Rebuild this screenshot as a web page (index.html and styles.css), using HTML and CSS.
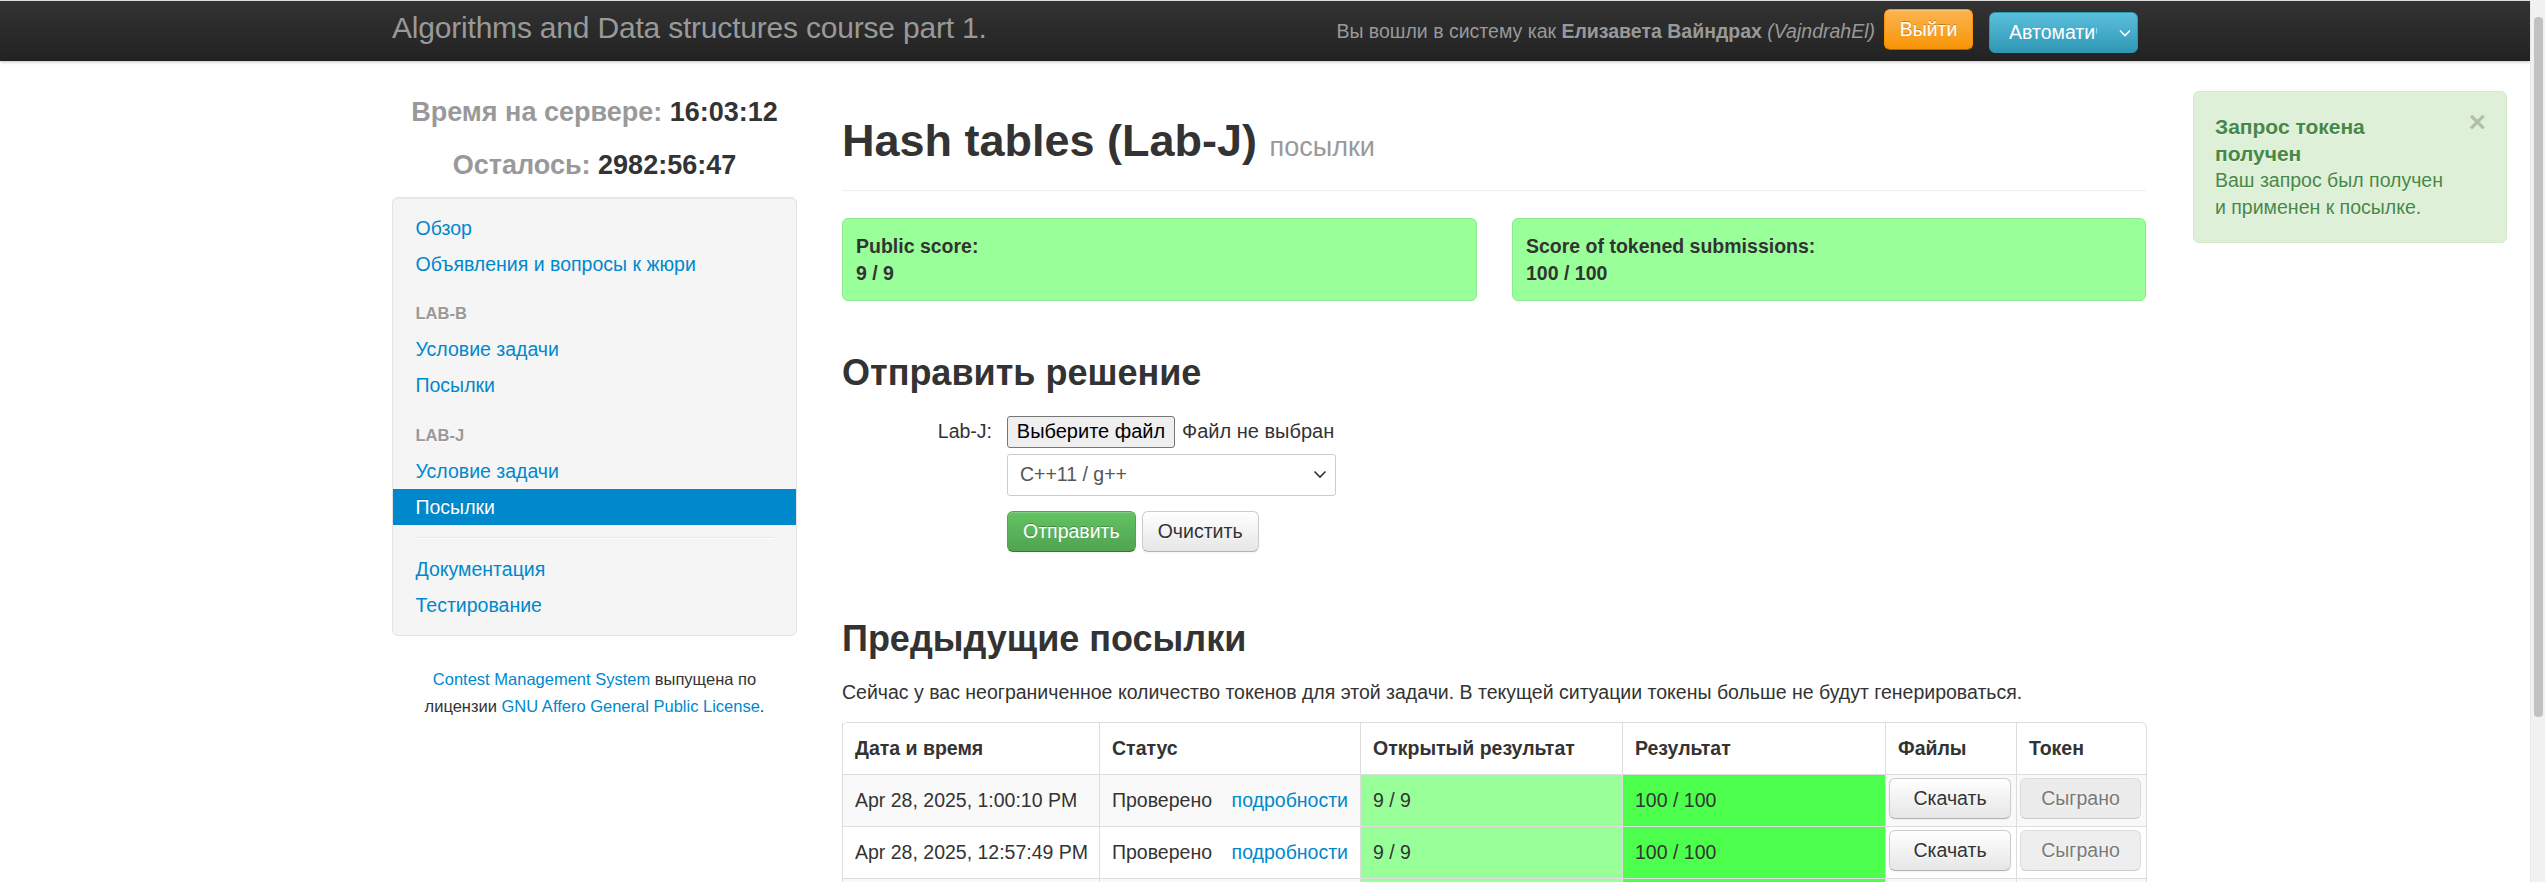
FILE: index.html
```html
<!DOCTYPE html>
<html lang="ru">
<head>
<meta charset="utf-8">
<title>Hash tables (Lab-J) посылки</title>
<link rel="stylesheet" href="styles.css">
</head>
<body>
<header class="navbar">
  <div class="navbar-inner">
    <a class="brand" href="#">Algorithms and Data structures course part 1.</a>
    <div class="nav-right">
      <p class="navbar-text">Вы вошли в систему как <strong>Елизавета Вайндрах</strong> <em>(VajndrahEl)</em></p>
      <a class="btn btn-warning btn-logout" href="#">Выйти</a>
      <div class="lang-select">
        <span class="lang-text">Автоматически</span>
        <svg class="lang-chevron" width="12" height="8" viewBox="0 0 12 8"><path d="M1 1.5 L6 6.5 L11 1.5" fill="none" stroke="#fff" stroke-width="1.6"/></svg>
      </div>
    </div>
  </div>
</header>

<div class="page">
  <aside class="sidebar">
    <h3 class="clock first"><span class="clock-label">Время на сервере:</span> 16:03:12</h3>
    <h3 class="clock"><span class="clock-label">Осталось:</span> 2982:56:47</h3>
    <div class="well">
      <ul class="nav-list">
        <li><a href="#">Обзор</a></li>
        <li><a href="#">Объявления и вопросы к жюри</a></li>
        <li class="nav-header">LAB-B</li>
        <li><a href="#">Условие задачи</a></li>
        <li><a href="#">Посылки</a></li>
        <li class="nav-header">LAB-J</li>
        <li><a href="#">Условие задачи</a></li>
        <li class="active"><a href="#">Посылки</a></li>
        <li class="divider"></li>
        <li><a href="#">Документация</a></li>
        <li><a href="#">Тестирование</a></li>
      </ul>
    </div>
    <p class="footer"><a href="#">Contest Management System</a> выпущена по лицензии <a href="#">GNU Affero General Public License</a>.</p>
  </aside>

  <main class="main">
    <div class="page-header">
      <h1>Hash tables (Lab-J) <small>посылки</small></h1>
    </div>

    <div class="score-row">
      <div class="score-box">
        <strong>Public score:</strong><br>
        <strong>9 / 9</strong>
      </div>
      <div class="score-box">
        <strong>Score of tokened submissions:</strong><br>
        <strong>100 / 100</strong>
      </div>
    </div>

    <h2 class="section-title submit-title">Отправить решение</h2>
    <form class="submit-form">
      <div class="form-row">
        <label class="control-label">Lab-J:</label>
        <div class="controls file-controls">
          <span class="file-btn">Выберите файл</span>
          <span class="file-name">Файл не выбран</span>
        </div>
      </div>
      <div class="form-row">
        <span class="control-label"></span>
        <div class="controls">
          <div class="select">
            <span>C++11 / g++</span>
            <svg width="14" height="9" viewBox="0 0 14 9"><path d="M1.5 1.5 L7 7 L12.5 1.5" fill="none" stroke="#333" stroke-width="1.6"/></svg>
          </div>
        </div>
      </div>
      <div class="form-row actions">
        <span class="control-label"></span>
        <div class="controls buttons">
          <span class="btn btn-success">Отправить</span>
          <span class="btn">Очистить</span>
        </div>
      </div>
    </form>

    <h2 class="section-title prev-title">Предыдущие посылки</h2>
    <p class="tokens-note">Сейчас у вас неограниченное количество токенов для этой задачи. В текущей ситуации токены больше не будут генерироваться.</p>

    <table class="sub-table">
      <colgroup>
        <col class="c-date"><col class="c-status"><col class="c-pub"><col class="c-res"><col class="c-files"><col class="c-token">
      </colgroup>
      <thead>
        <tr>
          <th>Дата и время</th>
          <th>Статус</th>
          <th>Открытый результат</th>
          <th>Результат</th>
          <th>Файлы</th>
          <th>Токен</th>
        </tr>
      </thead>
      <tbody>
        <tr>
          <td>Apr 28, 2025, 1:00:10 PM</td>
          <td><div class="status"><span>Проверено</span><a href="#">подробности</a></div></td>
          <td class="pub-score">9 / 9</td>
          <td class="res-score">100 / 100</td>
          <td class="btn-cell"><span class="btn btn-block">Скачать</span></td>
          <td class="btn-cell"><span class="btn btn-block disabled">Сыграно</span></td>
        </tr>
        <tr>
          <td>Apr 28, 2025, 12:57:49 PM</td>
          <td><div class="status"><span>Проверено</span><a href="#">подробности</a></div></td>
          <td class="pub-score">9 / 9</td>
          <td class="res-score">100 / 100</td>
          <td class="btn-cell"><span class="btn btn-block">Скачать</span></td>
          <td class="btn-cell"><span class="btn btn-block disabled">Сыграно</span></td>
        </tr>
        <tr>
          <td>Apr 28, 2025, 12:41:03 PM</td>
          <td><div class="status"><span>Проверено</span><a href="#">подробности</a></div></td>
          <td class="pub-score">9 / 9</td>
          <td class="res-score">100 / 100</td>
          <td class="btn-cell"><span class="btn btn-block">Скачать</span></td>
          <td class="btn-cell"><span class="btn btn-block disabled">Сыграно</span></td>
        </tr>
      </tbody>
    </table>
  </main>
</div>

<div class="alert">
  <span class="close">×</span>
  <h4>Запрос токена получен</h4>
  Ваш запрос был получен и применен к посылке.
</div>

<div class="scrollbar"><div class="scroll-thumb"></div></div>
</body>
</html>
```

FILE: styles.css
```css
* { box-sizing: border-box; }

html, body {
  margin: 0;
  padding: 0;
  overflow: hidden;
}

body {
  font-family: "Liberation Sans", Arial, Helvetica, sans-serif;
  font-size: 19.5px;
  line-height: 27px;
  color: #333;
  background: #fff;
  width: 2545px;
  height: 882px;
}

a { color: #0088cc; text-decoration: none; }

/* ---------- navbar ---------- */
.navbar {
  border-top: 1px solid #e6e6e6;
  margin-right: 15px;
}
.navbar-inner {
  height: 60px;
  background: linear-gradient(to bottom, #333333, #222222);
  box-shadow: 0 1px 3px rgba(0,0,0,0.25), inset 0 -1px 0 rgba(0,0,0,0.1);
  display: flex;
  align-items: flex-start;
  padding-left: 392px;
}
.brand {
  display: block;
  font-size: 30px;
  line-height: 30px;
  color: #999;
  padding-top: 12px;
  letter-spacing: -0.2px;
}
.nav-right {
  display: flex;
  align-items: flex-start;
  margin-left: auto;
  margin-right: 392px;
}
.navbar-text {
  margin: 0;
  line-height: 27px;
  padding-top: 16.5px;
  color: #999;
  margin-right: 9px;
}
.navbar-text strong { font-weight: bold; }
.navbar-text em { font-style: italic; }

.btn {
  display: inline-block;
  font-size: 19.5px;
  line-height: 27px;
  padding: 6px 15px;
  color: #333;
  text-align: center;
  text-shadow: 0 1px 1px rgba(255,255,255,0.75);
  background: linear-gradient(to bottom, #ffffff, #e6e6e6);
  border: 1px solid #cccccc;
  border-bottom-color: #b3b3b3;
  border-radius: 6px;
  box-shadow: inset 0 1px 0 rgba(255,255,255,0.2), 0 1px 2px rgba(0,0,0,0.05);
  white-space: nowrap;
}
.btn-warning {
  color: #fff;
  text-shadow: 0 -1px 0 rgba(0,0,0,0.25);
  background: linear-gradient(to bottom, #fbb450, #f89406);
  border-color: #f89406 #f89406 #ad6704;
}
.btn-success {
  color: #fff;
  text-shadow: 0 -1px 0 rgba(0,0,0,0.25);
  background: linear-gradient(to bottom, #62c462, #51a351);
  border-color: #51a351 #51a351 #387038;
}
.btn-logout {
  margin-top: 8px;
  width: 89px;
  padding-left: 0;
  padding-right: 0;
}
.lang-select {
  margin-top: 11px;
  margin-left: 16px;
  width: 149px;
  height: 41px;
  border-radius: 6px;
  background: linear-gradient(to bottom, #5bc0de, #2f96b4);
  border: 1px solid #2f96b4;
  display: flex;
  align-items: center;
  padding-left: 19px;
  color: #fff;
}
.lang-text {
  display: block;
  width: 88px;
  overflow: hidden;
  white-space: nowrap;
  line-height: 27px;
}
.lang-chevron { margin-left: 22px; }

/* ---------- page layout ---------- */
.page {
  display: flex;
  align-items: flex-start;
  padding-left: 392px;
  gap: 45px;
}
.sidebar {
  width: 405px;
  flex: none;
}
.main {
  width: 1304px;
  flex: none;
}

/* ---------- sidebar ---------- */
.clock {
  margin: 26px 0 0;
  font-size: 27px;
  line-height: 27px;
  font-weight: bold;
  text-align: center;
  color: #333;
}
.clock.first { margin-top: 37.5px; }
.clock-label { color: #999; }

.well {
  margin-top: 18.5px;
  background: #f5f5f5;
  border: 1px solid #e3e3e3;
  border-radius: 6px;
  box-shadow: inset 0 1px 1px rgba(0,0,0,0.05);
  padding: 12px 0;
}
.nav-list {
  list-style: none;
  margin: 0;
  padding: 0 22.5px;
}
.nav-list li a {
  display: block;
  margin: 0 -22.5px;
  padding: 4.5px 22.5px;
  line-height: 27px;
  color: #0088cc;
}
.nav-list .nav-header {
  margin-top: 13.5px;
  padding: 4.5px 0;
  font-size: 16.5px;
  font-weight: bold;
  line-height: 27px;
  color: #999;
  text-transform: uppercase;
  text-shadow: 0 1px 0 rgba(255,255,255,0.5);
}
.nav-list .active a {
  background: #0088cc;
  color: #fff;
  text-shadow: 0 -1px 0 rgba(0,0,0,0.2);
}
.nav-list .divider {
  height: 1px;
  margin: 12px 0;
  background: #e5e5e5;
  border-bottom: 1px solid #fff;
  box-sizing: content-box;
}
.footer {
  margin: 30px 0 0;
  font-size: 16.5px;
  line-height: 27px;
  text-align: center;
  padding: 0 20px;
}

/* ---------- main ---------- */
.page-header {
  margin-top: 53px;
  padding-bottom: 16px;
  border-bottom: 1px solid #eeeeee;
  margin-bottom: 27px;
}
.page-header h1 {
  margin: 0;
  font-size: 45px;
  line-height: 54px;
  font-weight: bold;
  color: #333;
}
.page-header h1 small {
  font-size: 27px;
  font-weight: normal;
  color: #999;
}

.score-row {
  display: grid;
  grid-template-columns: 635px 634px;
  column-gap: 35px;
}
.score-box {
  background: #99ff99;
  border: 1px solid #8ee88e;
  border-radius: 6px;
  padding: 13.5px 13px;
  line-height: 27px;
}

.section-title {
  margin: 0;
  font-size: 36px;
  line-height: 54px;
  font-weight: bold;
  color: #333;
}
.submit-title { margin-top: 45px; }
.prev-title { margin-top: 60.5px; }

.submit-form { margin-top: 15.5px; }
.form-row {
  display: flex;
  align-items: center;
}
.form-row + .form-row { margin-top: 6px; }
.form-row.actions { margin-top: 15px; }
.control-label {
  width: 150px;
  flex: none;
  text-align: right;
  padding-right: 0;
}
.controls {
  margin-left: 15px;
  display: flex;
  align-items: center;
}
.file-btn {
  display: inline-block;
  width: 168px;
  height: 32px;
  line-height: 29px;
  text-align: center;
  font-size: 20px;
  color: #000;
  background: #efefef;
  border: 1px solid #767676;
  border-radius: 3px;
}
.file-name {
  margin-left: 7px;
  font-size: 20px;
  color: #333;
}
.select {
  width: 329px;
  height: 42px;
  border: 1px solid #cccccc;
  border-radius: 3px;
  background: #fff;
  display: flex;
  align-items: center;
  justify-content: space-between;
  padding: 0 8px 0 12px;
  color: #555;
}
.buttons { gap: 6px; }

.tokens-note {
  margin: 13px 0 0;
}

/* ---------- table ---------- */
.sub-table {
  margin-top: 15.5px;
  width: 1304px;
  table-layout: fixed;
  border-collapse: separate;
  border-spacing: 0;
  border: 1px solid #dddddd;
  border-left: 0;
  border-radius: 6px;
}
.c-date { width: 257px; }
.c-status { width: 261px; }
.c-pub { width: 262px; }
.c-res { width: 263px; }
.c-files { width: 131px; }
.c-token { width: 130px; }

.sub-table th,
.sub-table td {
  padding: 12px;
  line-height: 27px;
  text-align: left;
  vertical-align: top;
  border-left: 1px solid #dddddd;
  border-top: 1px solid #dddddd;
  white-space: nowrap;
}
.sub-table thead tr:first-child th { border-top: 0; }
.sub-table th { font-weight: bold; }
.sub-table tbody tr:nth-child(odd) td { background: #f9f9f9; }
.sub-table tbody tr td.pub-score { background: #99ff99; }
.sub-table tbody tr td.res-score { background: #4dff4d; }
.status {
  display: flex;
  justify-content: space-between;
}
.sub-table td.btn-cell {
  padding: 3px 5px 3px 3px;
}
.btn-block {
  display: block;
  width: 100%;
  padding-left: 0;
  padding-right: 0;
}
.btn.disabled {
  background: #e6e6e6;
  opacity: 0.65;
  box-shadow: none;
}

/* ---------- alert (notification overlay) ---------- */
.alert {
  position: absolute;
  top: 91px;
  left: 2193px;
  width: 314px;
  padding: 21px 52.5px 21px 21px;
  background: #dff0d8;
  border: 1px solid #d6e9c6;
  border-radius: 6px;
  color: #468847;
  line-height: 27px;
  text-shadow: 0 1px 0 rgba(255,255,255,0.5);
}
.alert h4 {
  margin: 0;
  font-size: 21px;
  line-height: 27px;
  font-weight: bold;
  color: #468847;
}
.close {
  position: absolute;
  top: 16px;
  right: 20px;
  font-size: 30px;
  font-weight: bold;
  line-height: 27px;
  color: #000;
  opacity: 0.2;
  text-shadow: 0 1px 0 #fff;
}

/* ---------- fake scrollbar ---------- */
.scrollbar {
  position: fixed;
  top: 0;
  right: 0;
  width: 15px;
  height: 882px;
  background: #f1f1f1;
  border-left: 1px solid #e8e8e8;
}
.scroll-thumb {
  margin: 17px 2px 0 3px;
  height: 700px;
  border-radius: 4px;
  background: #c1c1c1;
}
```
